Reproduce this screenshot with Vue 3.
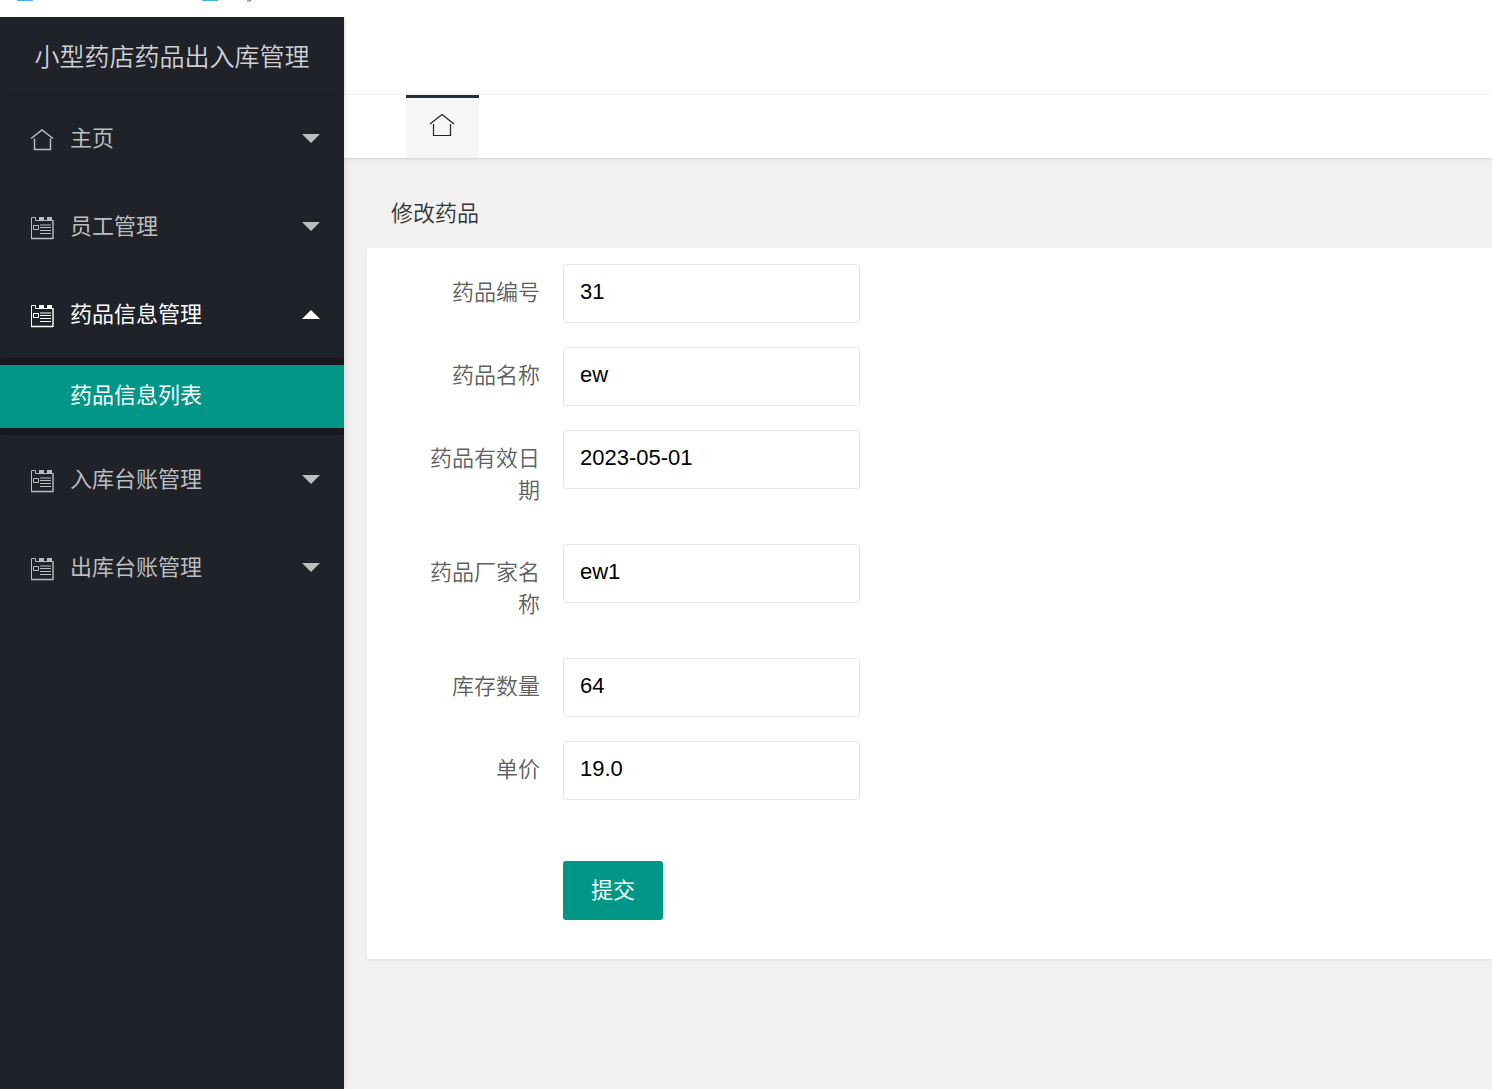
<script setup>
import { ref } from 'vue'

const menus = [
  { name: '主页', icon: 'home' },
  { name: '员工管理', icon: 'list' },
  { name: '药品信息管理', icon: 'list', open: true, children: ['药品信息列表'] },
  { name: '入库台账管理', icon: 'list' },
  { name: '出库台账管理', icon: 'list' }
]

const fields = ref([
  { id: 'code', label: '药品编号', value: '31' },
  { id: 'name', label: '药品名称', value: 'ew' },
  { id: 'expiry', label: '药品有效日期', value: '2023-05-01' },
  { id: 'maker', label: '药品厂家名称', value: 'ew1' },
  { id: 'stock', label: '库存数量', value: '64' },
  { id: 'price', label: '单价', value: '19.0' }
])
</script>

<template>
  <div class="page">
    <div class="bookmarks">
      <i class="mark"></i>
      <i class="mark"></i>
      <svg width="5" height="2" viewBox="0 0 5 2"><path d="M4 0 3 1H0" fill="none" stroke="#555a78" /></svg>
    </div>
    <div class="shell">
      <aside class="side">
        <div class="logo">小型药店药品出入库管理</div>
        <nav>
          <div v-for="menu in menus" :key="menu.name">
            <a href="#" class="item" :class="{ open: menu.open }">
              <svg v-if="menu.icon === 'home'" class="icon" viewBox="0 0 24 24">
                <path d="M1 10.5 12 2l11 8.5M4.5 10.5V21.5H20.5V10.5" fill="none" stroke="currentColor" stroke-width="1.5" />
              </svg>
              <svg v-else class="icon" viewBox="0 0 24 24">
                <path d="M1.5 22.5V1.5H5.5V4.5H23" fill="none" stroke="currentColor" />
                <path d="M1 22.5H23M23 4V23" fill="none" stroke="currentColor" stroke-width="1.4" />
                <path d="M9 1H14V5H9ZM17 1H22V5H17Z" fill="currentColor" />
                <path d="M3.5 9.5H8.5V13.5H3.5Z" fill="none" stroke="currentColor" />
                <path d="M10 9H21M10 11.5H21M10 14.5H21M10 17.5H21" fill="none" stroke="currentColor" />
              </svg>
              <span class="name">{{ menu.name }}</span>
              <i class="caret"></i>
            </a>
            <div v-if="menu.children" class="sub">
              <a v-for="child in menu.children" :key="child" href="#">{{ child }}</a>
            </div>
          </div>
        </nav>
      </aside>
      <main class="main">
        <header class="top"></header>
        <div class="tabs">
          <a href="#" class="tab" aria-label="主页">
            <svg width="26" height="26" viewBox="0 0 26 26">
              <path d="M1 12 13 2.5 25 12M4.5 12V23.5H21.5V12" fill="none" stroke="#222" stroke-width="1.2" />
            </svg>
          </a>
        </div>
        <section class="content">
          <h1>修改药品</h1>
          <form class="card" @submit.prevent>
            <div v-for="field in fields" :key="field.id" class="row">
              <label :for="field.id">{{ field.label }}</label>
              <input :id="field.id" v-model="field.value" type="text" />
            </div>
            <button type="submit">提交</button>
          </form>
        </section>
      </main>
    </div>
  </div>
</template>

<style>
body {
  margin: 0;
  background: #f1f1f1;
}
</style>

<style scoped>
* {
  box-sizing: border-box;
}
.page {
  display: flex;
  flex-direction: column;
  min-height: 100vh;
  font-family: "Liberation Sans", "Noto Sans CJK SC", sans-serif;
  font-size: 22px;
}
a {
  text-decoration: none;
}
.bookmarks {
  display: flex;
  height: 17px;
  padding-left: 17px;
  background: #fff;
}
.mark {
  width: 16px;
  height: 1px;
  margin-right: 169px;
  background: #3db5e0;
}
.mark + .mark {
  margin-right: 29px;
}
.shell {
  display: flex;
  flex: 1;
}
.side {
  position: relative;
  z-index: 1;
  flex: 0 0 344px;
  background: #20222a;
  box-shadow: 1px 0 6px rgba(0, 0, 0, 0.1);
  clip-path: inset(0 -8px 0 0);
}
.logo {
  height: 77px;
  line-height: 80px;
  text-align: center;
  font-size: 25px;
  font-weight: 350;
  color: #d0d0d2;
  box-shadow: 0 1px 2px rgba(0, 0, 0, 0.15);
}
.item {
  display: flex;
  align-items: center;
  height: 88px;
  padding: 0 24px 0 30px;
  color: #bcbdbf;
}
.item.open {
  color: #fff;
}
.icon {
  width: 24px;
  height: 24px;
  margin: 4px 16px 0 0;
}
.name {
  flex: 1;
  padding-bottom: 4px;
}
.caret {
  border: 9px solid transparent;
  border-top-color: currentColor;
  border-bottom-width: 0;
}
.open .caret {
  border-width: 0 9px 9px;
  border-bottom-color: currentColor;
}
.sub {
  padding: 7px 0;
  border-radius: 3px;
  background: #17191e;
}
.sub a {
  display: block;
  height: 63px;
  padding-left: 70px;
  line-height: 62px;
  color: #fff;
  background: #009688;
}
.main {
  flex: 1;
  min-width: 0;
  background: #f1f1f1;
}
.top {
  height: 78px;
  border-bottom: 1px solid #f6f6f6;
  background: #fff;
}
.tabs {
  display: flex;
  height: 63px;
  padding-left: 62px;
  background: #fff;
  box-shadow: 0 1px 3px rgba(0, 0, 0, 0.15);
}
.tab {
  display: flex;
  align-items: center;
  justify-content: center;
  width: 73px;
  padding: 0 2px 6px 0;
  border-top: 3px solid #292f38;
  background: #f6f6f6;
}
.content {
  padding: 34px 0 0 23px;
}
h1 {
  margin: 0;
  padding: 0 24px;
  font-size: 22px;
  font-weight: 350;
  line-height: 44px;
  color: #333;
}
.card {
  margin-top: 12px;
  padding: 16px 0 39px 63px;
  border-radius: 3px 0 0 3px;
  background: #fff;
  box-shadow: 0 1px 3px rgba(0, 0, 0, 0.08);
}
.row {
  display: flex;
  align-items: flex-start;
  gap: 23px;
  margin-bottom: 24px;
}
label {
  width: 110px;
  padding: 13px 0;
  line-height: 32px;
  text-align: right;
  font-weight: 350;
  color: #606060;
}
input {
  width: 297px;
  height: 59px;
  padding: 0 16px 3px;
  border: 1px solid #e6e6e6;
  border-radius: 3px;
  font: inherit;
  color: #000;
  background: #fff;
}
button {
  display: block;
  width: 100px;
  height: 59px;
  margin: 61px 0 0 133px;
  padding: 0 0 5px;
  border: 0;
  border-radius: 3px;
  font: inherit;
  color: #fff;
  background: #009688;
}
</style>
